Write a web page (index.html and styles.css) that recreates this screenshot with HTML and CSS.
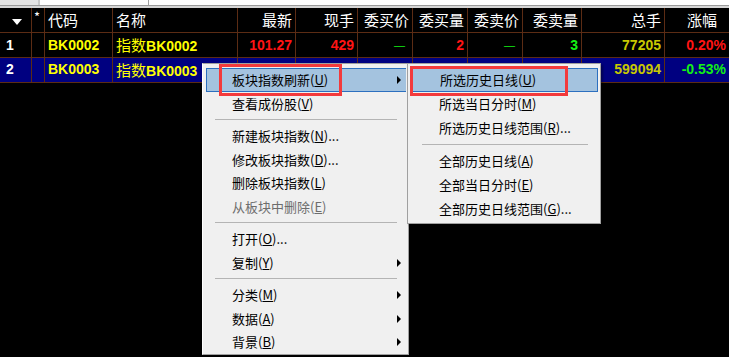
FILE: index.html
```html
<!DOCTYPE html>
<html lang="zh-CN">

<head>
    <title>板块指数</title>
    <meta charset="UTF-8">
    <link rel="stylesheet" href="styles.css">
</head>

<body>
    <div class="tabs">
        <span class="tab tab-a"></span>
        <span class="tab tab-b"></span>
        <span class="tab-rest"></span>
    </div>

    <div class="quote">
        <div class="row head">
            <div class="c"><i class="down"></i></div>
            <div class="c star">*</div>
            <div class="c l">代码</div>
            <div class="c l">名称</div>
            <div class="c">最新</div>
            <div class="c">现手</div>
            <div class="c">委买价</div>
            <div class="c">委买量</div>
            <div class="c">委卖价</div>
            <div class="c">委卖量</div>
            <div class="c">总手</div>
            <div class="c last">涨幅</div>
        </div>
        <div class="row data">
            <div class="c l num">1</div>
            <div class="c"></div>
            <div class="c l yel">BK0002</div>
            <div class="c l yel"><span class="cn">指数</span>BK0002</div>
            <div class="c red">101.27</div>
            <div class="c red">429</div>
            <div class="c grn dash">—</div>
            <div class="c red">2</div>
            <div class="c grn dash">—</div>
            <div class="c grn">3</div>
            <div class="c olv">77205</div>
            <div class="c red last">0.20%</div>
        </div>
        <div class="row data sel">
            <div class="c l num">2</div>
            <div class="c"></div>
            <div class="c l yel">BK0003</div>
            <div class="c l yel"><span class="cn">指数</span>BK0003</div>
            <div class="c"></div>
            <div class="c grn">17</div>
            <div class="c"></div>
            <div class="c red">258</div>
            <div class="c"></div>
            <div class="c grn">327</div>
            <div class="c olv">599094</div>
            <div class="c grn last">-0.53%</div>
        </div>
    </div>

    <!-- 右键菜单 -->
    <div class="menu main-menu">
        <div class="item on">板块指数刷新(<u>U</u>)<i class="arrow"></i></div>
        <div class="item">查看成份股(<u>V</u>)</div>
        <div class="sep"></div>
        <div class="item">新建板块指数(<u>N</u>)...</div>
        <div class="item">修改板块指数(<u>D</u>)...</div>
        <div class="item">删除板块指数(<u>L</u>)</div>
        <div class="item off">从板块中删除(<u>E</u>)</div>
        <div class="sep"></div>
        <div class="item">打开(<u>O</u>)...</div>
        <div class="item">复制(<u>Y</u>)<i class="arrow"></i></div>
        <div class="sep"></div>
        <div class="item">分类(<u>M</u>)<i class="arrow"></i></div>
        <div class="item">数据(<u>A</u>)<i class="arrow"></i></div>
        <div class="item">背景(<u>B</u>)<i class="arrow"></i></div>
    </div>

    <div class="menu sub-menu">
        <div class="item on">所选历史日线(<u>U</u>)</div>
        <div class="item">所选当日分时(<u>M</u>)</div>
        <div class="item">所选历史日线范围(<u>R</u>)...</div>
        <div class="sep"></div>
        <div class="item">全部历史日线(<u>A</u>)</div>
        <div class="item">全部当日分时(<u>E</u>)</div>
        <div class="item">全部历史日线范围(<u>G</u>)...</div>
    </div>

    <!-- 标注框 -->
    <div class="mark mark-a"></div>
    <div class="mark mark-b"></div>
</body>

</html>
```

FILE: styles.css
```css
html,
body {
    margin: 0;
    height: 357px;
    overflow: hidden;
    background: #000;
}

body {
    position: relative;
    font-family: "Liberation Sans", Arial, sans-serif;
}

.tabs {
    display: flex;
    height: 5px;
    background: #fff;
    border-bottom: 1px solid #9a9a9a;
}

.tab-a {
    width: 38px;
    background: #e4e4e4;
    border-right: 2px solid #c8c8c8;
}

.tab-b {
    width: 108px;
    background: #fff;
    border-right: 1px solid #a0a0a0;
}

.tab-rest {
    flex: 1;
}

.quote {
    border-top: 2px solid #d6d6d6;
}

.row {
    display: grid;
    grid-template-columns: 32px 13px 68px 125px 58px 62px 55px 55px 55px 59px 83px 68px;
    width: 733px;
    height: 25px;
    border-bottom: 1px solid #5c2c14;
    box-sizing: border-box;
}

.c {
    box-sizing: border-box;
    border-right: 1px solid #5c2c14;
    padding: 0 3px;
    line-height: 24px;
    text-align: right;
    white-space: nowrap;
    overflow: hidden;
}

.c.l {
    text-align: left;
}

.head .c {
    color: #fff;
    font-family: "Noto Sans CJK SC", sans-serif;
    font-size: 15px;
}

.head .c.last {
    padding-right: 15px;
}

.data .c.last {
    padding-right: 6px;
}

.head .star {
    font-size: 13px;
    line-height: 17px;
    text-align: left;
    padding-left: 2px;
}

.down {
    display: inline-block;
    margin: 0 6px 0 0;
    border-left: 5px solid transparent;
    border-right: 5px solid transparent;
    border-top: 6px solid #fff;
    vertical-align: 1px;
}

.data .c {
    font-size: 14px;
    font-weight: bold;
}

.data .num {
    color: #fff;
    padding-left: 6px;
}

.sel {
    background: #000080;
}

.sel .c {
    line-height: 23px;
}

.yel {
    color: #ffff00;
}

.red {
    color: #ff1414;
}

.grn {
    color: #14f014;
}

.olv {
    color: #c8c800;
}

.data .dash {
    font-size: 11px;
    font-weight: normal;
    padding-right: 7px;
}

.cn {
    font-family: "Noto Sans CJK SC", sans-serif;
    font-weight: normal;
    font-size: 15px;
}

.menu {
    position: absolute;
    background: #f0f0f0;
    border: 1px solid #a0a0a0;
    border-left-color: #fff;
    box-shadow: 2px 2px 2px rgba(0, 0, 0, 0.35);
    font-family: "Noto Sans CJK SC", sans-serif;
    font-size: 13px;
    color: #000;
}

.main-menu {
    left: 202px;
    top: 63px;
    width: 207px;
    padding: 4px 2px 0 3px;
    box-sizing: border-box;
}

.sub-menu {
    left: 407px;
    top: 63px;
    width: 194px;
    padding: 4px 2px 2px 2px;
    box-sizing: border-box;
    border-left-color: #a0a0a0;
}

.item {
    position: relative;
    height: 23.5px;
    line-height: 23.5px;
    padding-left: 26px;
    box-sizing: border-box;
    white-space: nowrap;
}

.sub-menu .item {
    height: 24px;
    line-height: 24px;
    padding-left: 29px;
}

.item u {
    text-underline-offset: 1px;
}

.item.on {
    background: #a4c3df;
    border: 1px solid #2c6fbf;
    line-height: 21.5px;
}

.sub-menu .item.on {
    line-height: 22px;
}

.main-menu .item.on {
    border-right: 0;
    padding-left: 25px;
}

.item.off {
    color: #6d6d6d;
}

.arrow {
    position: absolute;
    right: 5px;
    top: 8px;
    border-top: 4px solid transparent;
    border-bottom: 4px solid transparent;
    border-left: 4px solid #000;
}

.item.on .arrow {
    top: 7px;
}

.sep {
    height: 1px;
    margin: 4px 9px;
    background: #b4b4b4;
}

.sub-menu .sep {
    margin: 4px 10px 4px 12px;
}

.mark {
    position: absolute;
    border: 3px solid #f33a3c;
    box-sizing: border-box;
}

.mark-a {
    left: 219px;
    top: 64px;
    width: 123px;
    height: 32px;
}

.mark-b {
    left: 410px;
    top: 66px;
    width: 158px;
    height: 30px;
}
```
